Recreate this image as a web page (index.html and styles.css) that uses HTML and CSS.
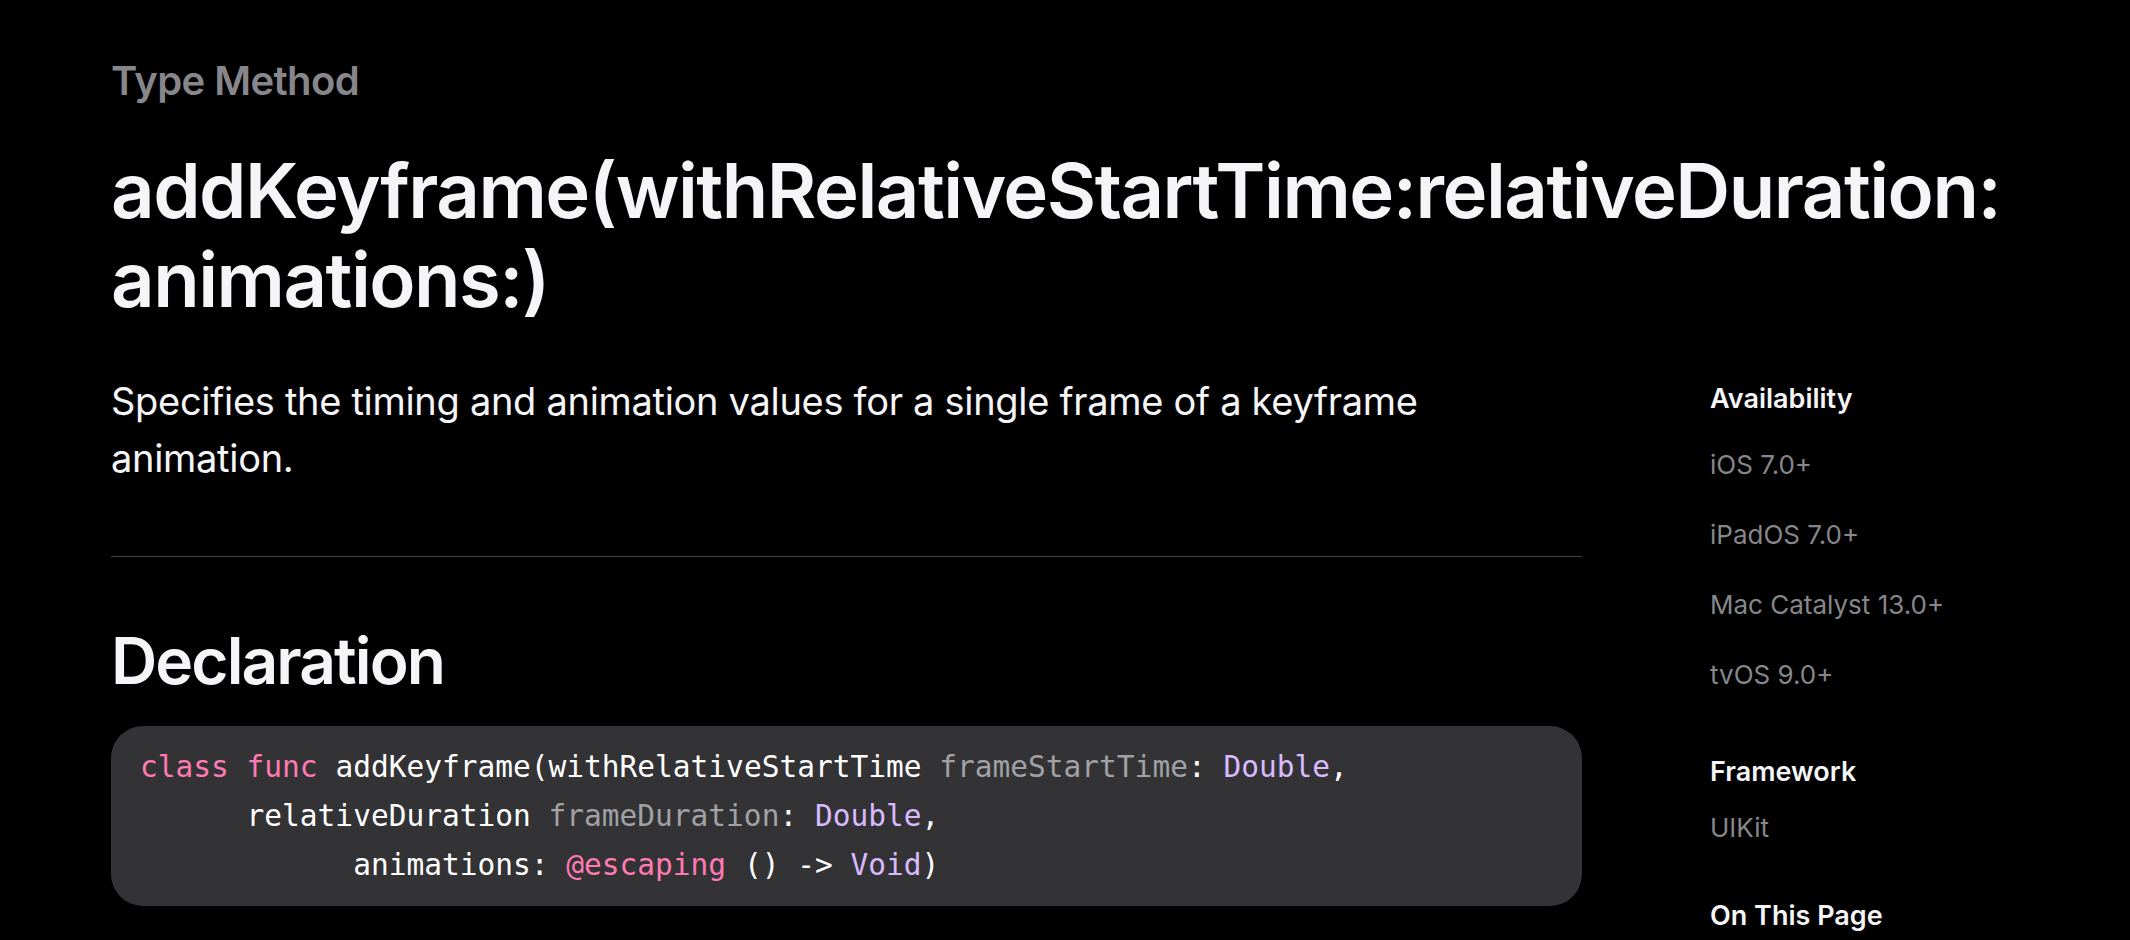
FILE: index.html
```html
<!DOCTYPE html>
<html lang="en">
<head>
<meta charset="utf-8">
<title>addKeyframe(withRelativeStartTime:relativeDuration:animations:)</title>
<link rel="stylesheet" href="styles.css">
</head>
<body>
<main class="page">
  <header class="topic-head">
    <div class="eyebrow">Type Method</div>
    <h1 class="title">addKeyframe(withRelativeStartTime:relativeDuration:<wbr>animations:)</h1>
  </header>
  <div class="layout">
    <div class="content">
      <p class="abstract">Specifies the timing and animation values for a single frame of a keyframe animation.</p>
      <hr class="rule">
      <h2 class="section-title">Declaration</h2>
      <pre class="code"><code><span class="line"><span class="kw">class</span> <span class="kw">func</span> addKeyframe(withRelativeStartTime <span class="param">frameStartTime</span>: <span class="type">Double</span>,</span><span class="line">      relativeDuration <span class="param">frameDuration</span>: <span class="type">Double</span>,</span><span class="line">            animations: <span class="kw">@escaping</span> () -&gt; <span class="type">Void</span>)</span></code></pre>
    </div>
    <aside class="sidebar">
      <h3 class="side-head">Availability</h3>
      <ul class="side-list avail">
        <li>iOS 7.0+</li>
        <li>iPadOS 7.0+</li>
        <li>Mac Catalyst 13.0+</li>
        <li>tvOS 9.0+</li>
      </ul>
      <h3 class="side-head fw">Framework</h3>
      <ul class="side-list framework">
        <li>UIKit</li>
      </ul>
      <h3 class="side-head otp">On This Page</h3>
    </aside>
  </div>
</main>
</body>
</html>
```
FILE: styles.css
```css
html, body {
  margin: 0;
  padding: 0;
  background: #000;
  height: 100%;
  overflow: hidden;
}
body {
  font-family: Inter, "Noto Sans", "Liberation Sans", sans-serif;
  color: #f5f5f7;
}
.page {
  padding: 57px 0 0 111px;
}
.eyebrow {
  font-size: 40px;
  line-height: 48px;
  font-weight: 600;
  color: #86868b;
  letter-spacing: -0.6px;
}
.title {
  margin: 41px 0 0 0;
  font-size: 76px;
  line-height: 89px;
  font-weight: 600;
  letter-spacing: -1.5px;
  color: #f5f5f7;
  max-width: 1960px;
}
.layout {
  display: flex;
  gap: 128px;
  margin-top: 49px;
}
.content {
  width: 1471px;
  flex: none;
}
.abstract {
  margin: 0;
  font-size: 38px;
  line-height: 57px;
  font-weight: 400;
  letter-spacing: -0.3px;
  color: #f5f5f7;
}
.rule {
  margin: 69px 0 0 0;
  border: 0;
  height: 1px;
  background: #424245;
}
.section-title {
  margin: 65px 0 0 0;
  font-size: 64px;
  line-height: 77px;
  font-weight: 600;
  letter-spacing: -1.9px;
  color: #f5f5f7;
}
.code {
  margin: 27px 0 0 0;
  background: #333336;
  border-radius: 32px;
  padding: 17px 29px 16px;
  font-family: "DejaVu Sans Mono", "Liberation Mono", monospace;
  font-size: 29.5px;
  line-height: 49px;
  color: #ffffff;
  white-space: pre;
}
.code .line {
  display: block;
  height: 49px;
}
.kw { color: #ff7ab2; }
.param { color: #a1a1a6; }
.type { color: #dabaff; }

.sidebar {
  padding-top: 10px;
}
.side-head {
  margin: 0;
  font-size: 27px;
  line-height: 32px;
  font-weight: 600;
  color: #f5f5f7;
}
.side-list {
  list-style: none;
  margin: 0;
  padding: 0;
  display: flex;
  flex-direction: column;
  font-size: 26px;
  line-height: 40px;
  color: #86868b;
}
.side-list.avail {
  margin-top: 30px;
  gap: 30px;
}
.side-head.fw {
  margin-top: 61px;
}
.side-list.framework {
  margin-top: 20px;
}
.side-head.otp {
  margin-top: 52px;
}
```
